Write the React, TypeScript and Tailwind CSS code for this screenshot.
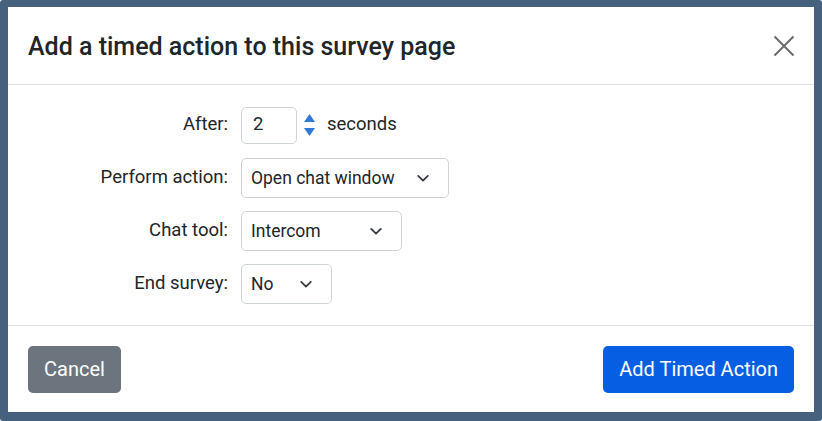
function Chevron() {
  return (
    <svg width="14" height="14" viewBox="0 0 16 16" className="shrink-0">
      <path d="M2.5 5.5 8 11l5.5-5.5" fill="none" stroke="#343a40" strokeWidth="2" strokeLinecap="round" strokeLinejoin="round" />
    </svg>
  )
}

function Select({ value, width }: { value: string; width: string }) {
  return (
    <div className={`${width} h-10 flex items-center justify-between pl-[9px] pr-[18px] border border-[#ced4da] rounded-[5px] bg-white text-[17.5px] text-[#212529]`}>
      <span className="pt-[1px]">{value}</span>
      <Chevron />
    </div>
  )
}

export default function App() {
  return (
    <div className="w-[822px] h-[421px] bg-[#46617d] pt-[7px] pl-[8px] pr-[8px] pb-[9px] rounded-[3px]" style={{ fontFamily: 'Roboto, "Liberation Sans", sans-serif' }}>
      <div className="w-full h-full bg-white flex flex-col">
        {/* Header */}
        <div className="h-[78px] flex items-center justify-between px-5 border-b border-[#dee2e6]">
          <h5 className="text-[25px] font-medium text-[#212529] leading-none pt-[2px]">Add a timed action to this survey page</h5>
          <button className="w-6 h-6 flex items-center justify-center mr-[-2px]">
            <svg width="22" height="22" viewBox="0 0 22 22">
              <path d="M1.5 1.5l19 19M20.5 1.5l-19 19" stroke="#6c6c6c" strokeWidth="2" />
            </svg>
          </button>
        </div>

        {/* Body */}
        <div className="flex-1 px-5 pt-[20px] flex flex-col gap-[13px] text-[18.5px] text-[#212529]">
          <div className="flex items-center h-10">
            <label className="w-[200px] text-right">After:</label>
            <div className="ml-[13px] w-[56px] h-[37px] border border-[#ced4da] rounded-[5px] flex items-center pl-[11px]">2</div>
            <div className="ml-[7px] flex flex-col gap-[6px]">
              <svg width="11" height="8" viewBox="0 0 11 8"><path d="M5.5 0 11 8H0z" fill="#2f7ad8" /></svg>
              <svg width="11" height="8" viewBox="0 0 11 8"><path d="M0 0h11L5.5 8z" fill="#2f7ad8" /></svg>
            </div>
            <span className="ml-[12px] pb-[1px]">seconds</span>
          </div>
          <div className="flex items-center h-10">
            <label className="w-[200px] text-right">Perform action:</label>
            <div className="ml-[13px]"><Select value="Open chat window" width="w-[208px]" /></div>
          </div>
          <div className="flex items-center h-10">
            <label className="w-[200px] text-right">Chat tool:</label>
            <div className="ml-[13px]"><Select value="Intercom" width="w-[161px]" /></div>
          </div>
          <div className="flex items-center h-10">
            <label className="w-[200px] text-right">End survey:</label>
            <div className="ml-[13px]"><Select value="No" width="w-[91px]" /></div>
          </div>
        </div>

        {/* Footer */}
        <div className="h-[87px] border-t border-[#dee2e6] flex items-center justify-between px-5">
          <button className="h-[47px] px-4 rounded-[5px] bg-[#6c757d] text-white text-[20px]">Cancel</button>
          <button className="h-[47px] px-4 rounded-[5px] bg-[#065fe3] text-white text-[20px]">Add Timed Action</button>
        </div>
      </div>
    </div>
  )
}
